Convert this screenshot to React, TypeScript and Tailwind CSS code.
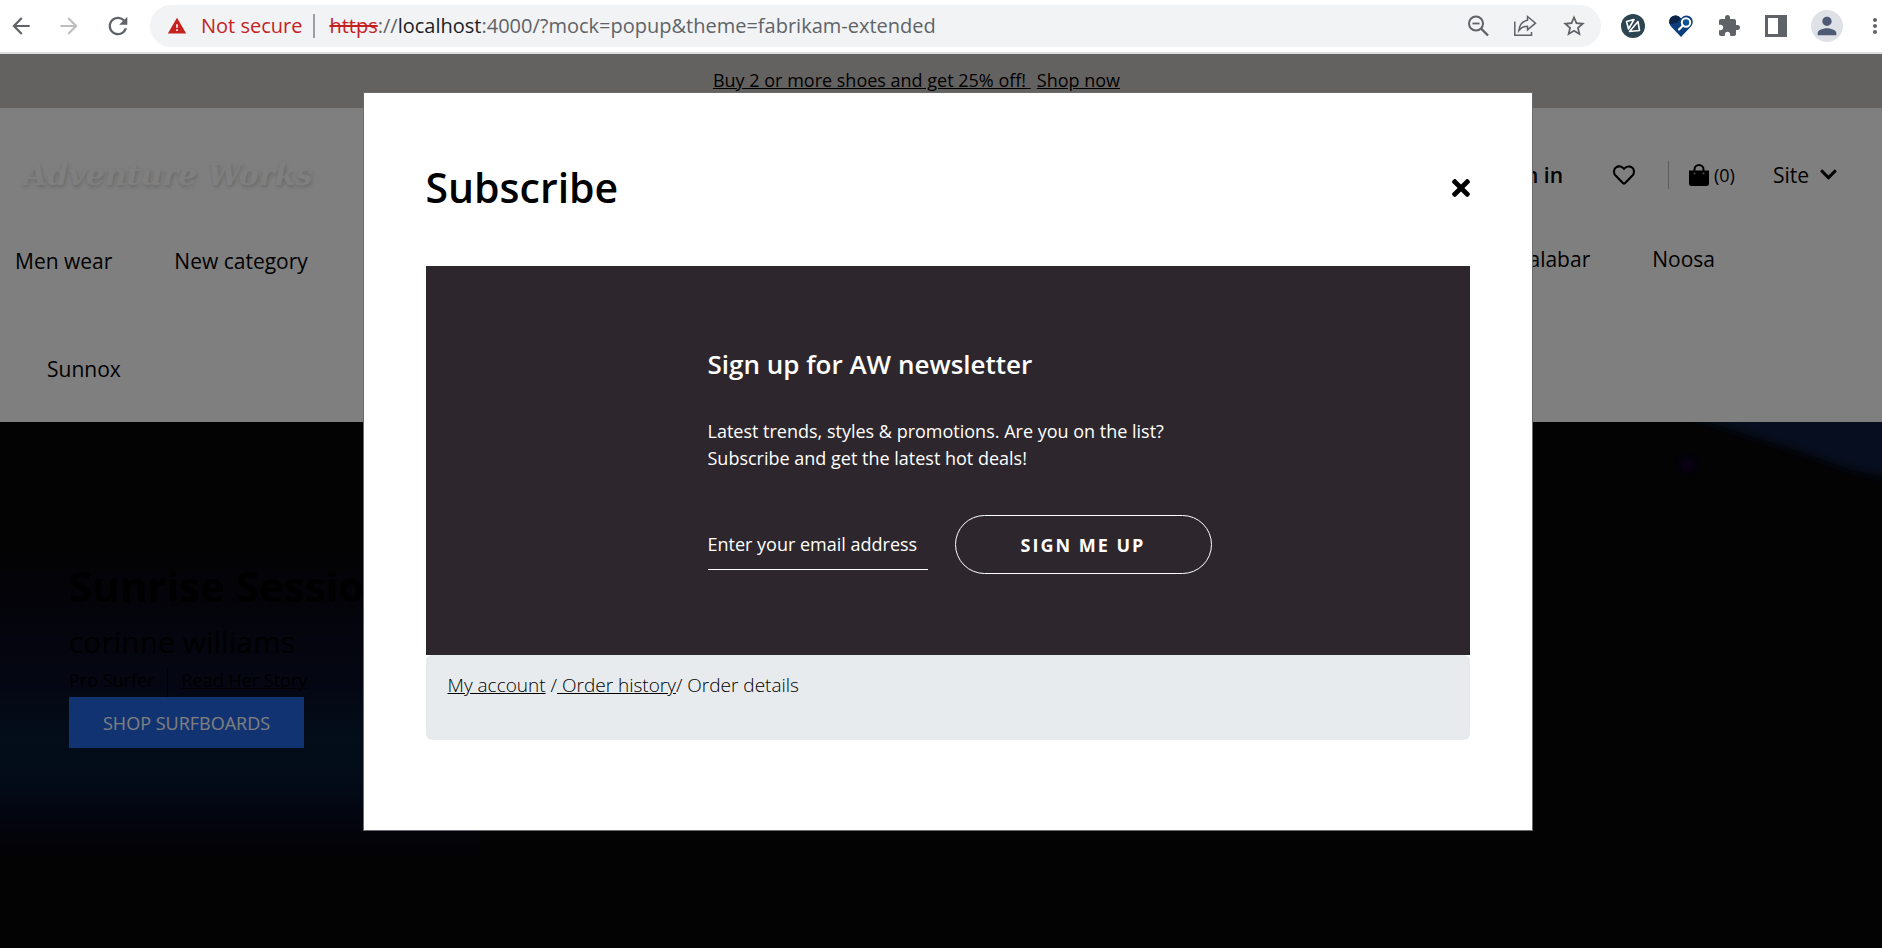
import React from "react";
import { MdArrowBack, MdArrowForward, MdRefresh, MdWarning, MdStarBorder, MdExtension, MdPerson, MdMoreVert } from "react-icons/md";
import { FaTimes, FaChevronDown, FaRegHeart } from "react-icons/fa";

function ZoomOutIcon() {
  return (
    <svg viewBox="0 0 22 22" className="size-[22px]" fill="none" stroke="#5f6368" strokeWidth="2">
      <circle cx="9" cy="8.5" r="7" />
      <path d="M14 13.5 21 20.5" strokeWidth="2.4" />
      <path d="M5.5 8.5h7" strokeWidth="1.8" />
    </svg>
  );
}

function ShareIcon() {
  return (
    <svg viewBox="0 0 24 22" className="h-[22px] w-6" fill="none" stroke="#5f6368" strokeWidth="1.5">
      <path d="M1.8 6.5V20.2H18.5V17" />
      <path d="M14.5 1.5 22.5 8.2 14.5 14.8V11.2C10.5 11.2 8 12.6 5.8 15.6 6.4 10.3 9.3 6.2 14.5 5.3Z" />
    </svg>
  );
}

function CompassExtIcon() {
  return (
    <svg viewBox="0 0 24 24" className="size-6">
      <circle cx="12" cy="12" r="12" fill="#2d4552" />
      <path d="M5.5 7.5 13 5.5 7.5 15Z" fill="none" stroke="#fff" strokeWidth="1.6" strokeLinejoin="round" />
      <path d="M17 7.5 18.5 16.5 8.5 17.5Z" fill="none" stroke="#fff" strokeWidth="1.6" strokeLinejoin="round" />
    </svg>
  );
}

function HeartSearchIcon() {
  return (
    <svg viewBox="0 0 24 22" className="h-[22px] w-6">
      <path d="M12 22 2 11.5C-1 8 0 2.5 4 1 7-.3 10 .8 12 3.5 14 .8 17-.3 20 1c4 1.5 5 7 2 10.5Z" fill="#0b3f7d" />
      <path d="M12 3.5C10 .8 7-.3 4 1 .8 2.2-.5 6 .6 9L8 8Z" fill="#0a2547" />
      <circle cx="17" cy="7.5" r="4.2" fill="#0b5394" stroke="#fff" strokeWidth="2" />
      <path d="M14 10.5 10 14.5" stroke="#fff" strokeWidth="2.2" strokeLinecap="round" />
    </svg>
  );
}

function SidePanelIcon() {
  return (
    <svg viewBox="0 0 22 22" className="size-[22px]">
      <path d="M0 0H22V22H0ZM3 3V19H13V3Z" fill="#5f6368" fillRule="evenodd" />
    </svg>
  );
}

function BagIcon() {
  return (
    <svg viewBox="0 0 20 22" className="h-[22px] w-5">
      <path d="M0 6.5H20V19.5Q20 22 17.5 22H2.5Q0 22 0 19.5Z" fill="#000" />
      <path d="M5.5 10V5.5a4.5 4.5 0 0 1 9 0V10" fill="none" stroke="#000" strokeWidth="2" />
      <circle cx="5.5" cy="9.5" r="1" fill="#999" />
      <circle cx="14.5" cy="9.5" r="1" fill="#999" />
    </svg>
  );
}

function BrowserBar() {
  return (
    <div className="flex h-[54px] items-center border-b-2 border-[#dcdddf] bg-white pb-px text-[#5f6368]">
      <div className="flex shrink-0 items-center gap-[22px] pl-2">
        <button aria-label="Back"><MdArrowBack className="size-[26px]" /></button>
        <button aria-label="Forward" className="text-[#bdbfc1]"><MdArrowForward className="size-[26px]" /></button>
        <button aria-label="Reload"><MdRefresh className="size-7" /></button>
      </div>
      <div className="ml-[18px] flex h-[42px] min-w-0 flex-1 items-center rounded-full bg-[#f1f3f4] pr-[14px] pl-[17px]">
        <MdWarning className="size-5 shrink-0 text-[#c5221f]" />
        <span className="ml-[14px] text-xl whitespace-nowrap text-[#c5221f]">Not secure</span>
        <span className="mr-[14px] ml-[11px] h-6 w-[2px] shrink-0 bg-[#9aa0a6]" />
        <span className="min-w-0 flex-1 truncate text-xl">
          <span className="text-[#c5221f] line-through">https</span>://<span className="text-[#202124]">localhost</span>:4000/?mock=popup&amp;theme=fabrikam-extended
        </span>
        <div className="flex items-center gap-6">
          <button aria-label="Zoom out"><ZoomOutIcon /></button>
          <button aria-label="Share"><ShareIcon /></button>
          <button aria-label="Bookmark"><MdStarBorder className="size-[26px]" /></button>
        </div>
      </div>
      <div className="-mr-[5px] ml-5 flex shrink-0 items-center gap-6">
        <button aria-label="Compass extension"><CompassExtIcon /></button>
        <button aria-label="Search extension"><HeartSearchIcon /></button>
        <button aria-label="Extensions"><MdExtension className="size-6" /></button>
        <button aria-label="Side panel"><SidePanelIcon /></button>
        <button aria-label="Profile" className="flex size-8 items-center justify-center rounded-full bg-[#dee1e6] text-[#4f5b74]">
          <MdPerson className="size-7" />
        </button>
        <button aria-label="Menu" className="-ml-1"><MdMoreVert className="size-6" /></button>
      </div>
    </div>
  );
}

function SiteHeader() {
  return (
    <header className="h-[314px] bg-white text-[21px] leading-8 text-black">
      <div className="flex h-[133px] items-center justify-between pr-11 pl-6">
        <a href="#home" className="font-['DejaVu_Serif',serif] text-[30px] font-bold text-white italic [text-shadow:1px_2px_4px_rgb(0_0_0/0.2)]">
          Adventure Works
        </a>
        <div className="flex items-center">
          <a href="#signin" className="font-semibold">Sign in</a>
          <a href="#wishlist" aria-label="Wishlist" className="ml-[50px]"><FaRegHeart className="size-[22px]" /></a>
          <span className="ml-[33px] h-7 w-px bg-[#bbb]" />
          <a href="#cart" className="ml-5 flex items-center gap-[5px]">
            <BagIcon />
            <span className="text-lg">(0)</span>
          </a>
          <button className="ml-[38px] flex items-center gap-[10px]">Site <FaChevronDown className="size-[19px]" /></button>
        </div>
      </div>
      <nav className="flex justify-between pr-[167px] pl-[15px]">
        <div className="flex gap-[62px] pt-1">
          <a href="#men">Men wear</a>
          <a href="#new">New category</a>
        </div>
        <div className="flex gap-[62px] pt-[2px]">
          <a href="#malabar">Malabar</a>
          <a href="#noosa">Noosa</a>
        </div>
      </nav>
      <a href="#sunnox" className="mt-[76px] ml-[47px] inline-block">Sunnox</a>
    </header>
  );
}

function HeroBackdrop() {
  return (
    <svg aria-hidden="true" className="absolute inset-0 h-full w-full">
      <defs>
        <linearGradient id="wave" x1="0" y1="0" x2="0" y2="1">
          <stop offset="0.22" stopColor="#060606" />
          <stop offset="0.34" stopColor="#090714" />
          <stop offset="0.5" stopColor="#080e26" />
          <stop offset="0.6" stopColor="#071c34" />
          <stop offset="0.68" stopColor="#071632" />
          <stop offset="0.76" stopColor="#07091c" />
          <stop offset="0.84" stopColor="#060606" />
        </linearGradient>
        <filter id="soft" x="-20%" y="-50%" width="140%" height="200%">
          <feGaussianBlur stdDeviation="5" />
        </filter>
      </defs>
      <rect width="480" height="100%" fill="url(#wave)" />
      <svg x="100%" overflow="visible">
        <g filter="url(#soft)">
          <path d="M-205-10 20-10 20 58-30 48-80 30-130 14Z" fill="#081f40" />
          <circle cx="-195" cy="43" r="8" fill="#0a0430" />
        </g>
      </svg>
    </svg>
  );
}

function Hero() {
  return (
    <section className="relative flex-1 overflow-hidden bg-[#060606] text-black">
      <HeroBackdrop />
      <div className="relative pl-[69px]">
        <h1 className="pt-[134px] text-[42px] leading-[60px] font-bold">Sunrise Session</h1>
        <p className="text-[30px] leading-[52px]">corinne williams</p>
        <div className="flex h-[29px] text-lg leading-6">
          <span>Pro Surfer</span>
          <span className="mx-[13px] h-full w-px bg-black" />
          <a href="#story" className="underline">Read Her Story</a>
        </div>
        <button className="h-[51px] bg-[#2266e3] px-[34px] text-lg text-white">SHOP SURFBOARDS</button>
      </div>
    </section>
  );
}

function SubscribeDialog() {
  return (
    <div role="dialog" aria-modal="true" aria-labelledby="subscribe-title" className="w-full max-w-[1170px] border border-[#6b6b6b] bg-white px-[62px] pb-[90px] text-black">
      <div className="flex h-[173px] items-center justify-between pt-4">
        <h2 id="subscribe-title" className="text-[41px] font-semibold">Subscribe</h2>
        <button aria-label="Close"><FaTimes className="-mr-1 size-[26px]" /></button>
      </div>
      <div className="bg-[#2d272d] pt-[78px] pb-[81px] pl-[282px] text-lg text-white">
        <h3 className="text-[26px] leading-10 font-semibold">Sign up for AW newsletter</h3>
        <p className="mt-[34px] leading-[27px]">
          Latest trends, styles &amp; promotions. Are you on the list?
          <br />
          Subscribe and get the latest hot deals!
        </p>
        <form className="mt-[43px] flex items-center gap-[27px]" onSubmit={(e) => e.preventDefault()}>
          <input
            type="email"
            aria-label="Email address"
            placeholder="Enter your email address"
            className="h-[51px] w-[220px] border-b border-white bg-transparent outline-none placeholder:text-white placeholder:opacity-100"
          />
          <button className="h-[59px] w-[257px] rounded-full border border-white font-bold tracking-[2px]">SIGN ME UP</button>
        </form>
      </div>
      <nav aria-label="Breadcrumb" className="h-[85px] rounded-[6px] bg-[#e8ebee] px-[22px] pt-4 text-[19px] leading-7 font-light whitespace-pre">
        <a href="#account" className="underline">My account</a>
        {" /"}
        <a href="#orders" className="underline">{" Order history"}</a>
        {"/ Order details"}
      </nav>
    </div>
  );
}

export default function App() {
  return (
    <div className="flex min-h-screen flex-col overflow-x-hidden bg-black font-['Open_Sans','Noto_Sans',sans-serif]">
      <BrowserBar />
      <div className="relative flex flex-1 flex-col">
        <div className="flex h-[54px] items-center justify-center gap-[6px] bg-[#c9c5c2] pr-[49px] pb-[2px] text-lg text-black">
          <a href="#offer" className="whitespace-pre underline">{"Buy 2 or more shoes and get 25% off! "}</a>
          <a href="#shop" className="underline">Shop now</a>
        </div>
        <SiteHeader />
        <Hero />
        <div className="absolute inset-0 flex items-start justify-center bg-black/50 pt-[38px] pl-[13px]">
          <SubscribeDialog />
        </div>
      </div>
    </div>
  );
}
